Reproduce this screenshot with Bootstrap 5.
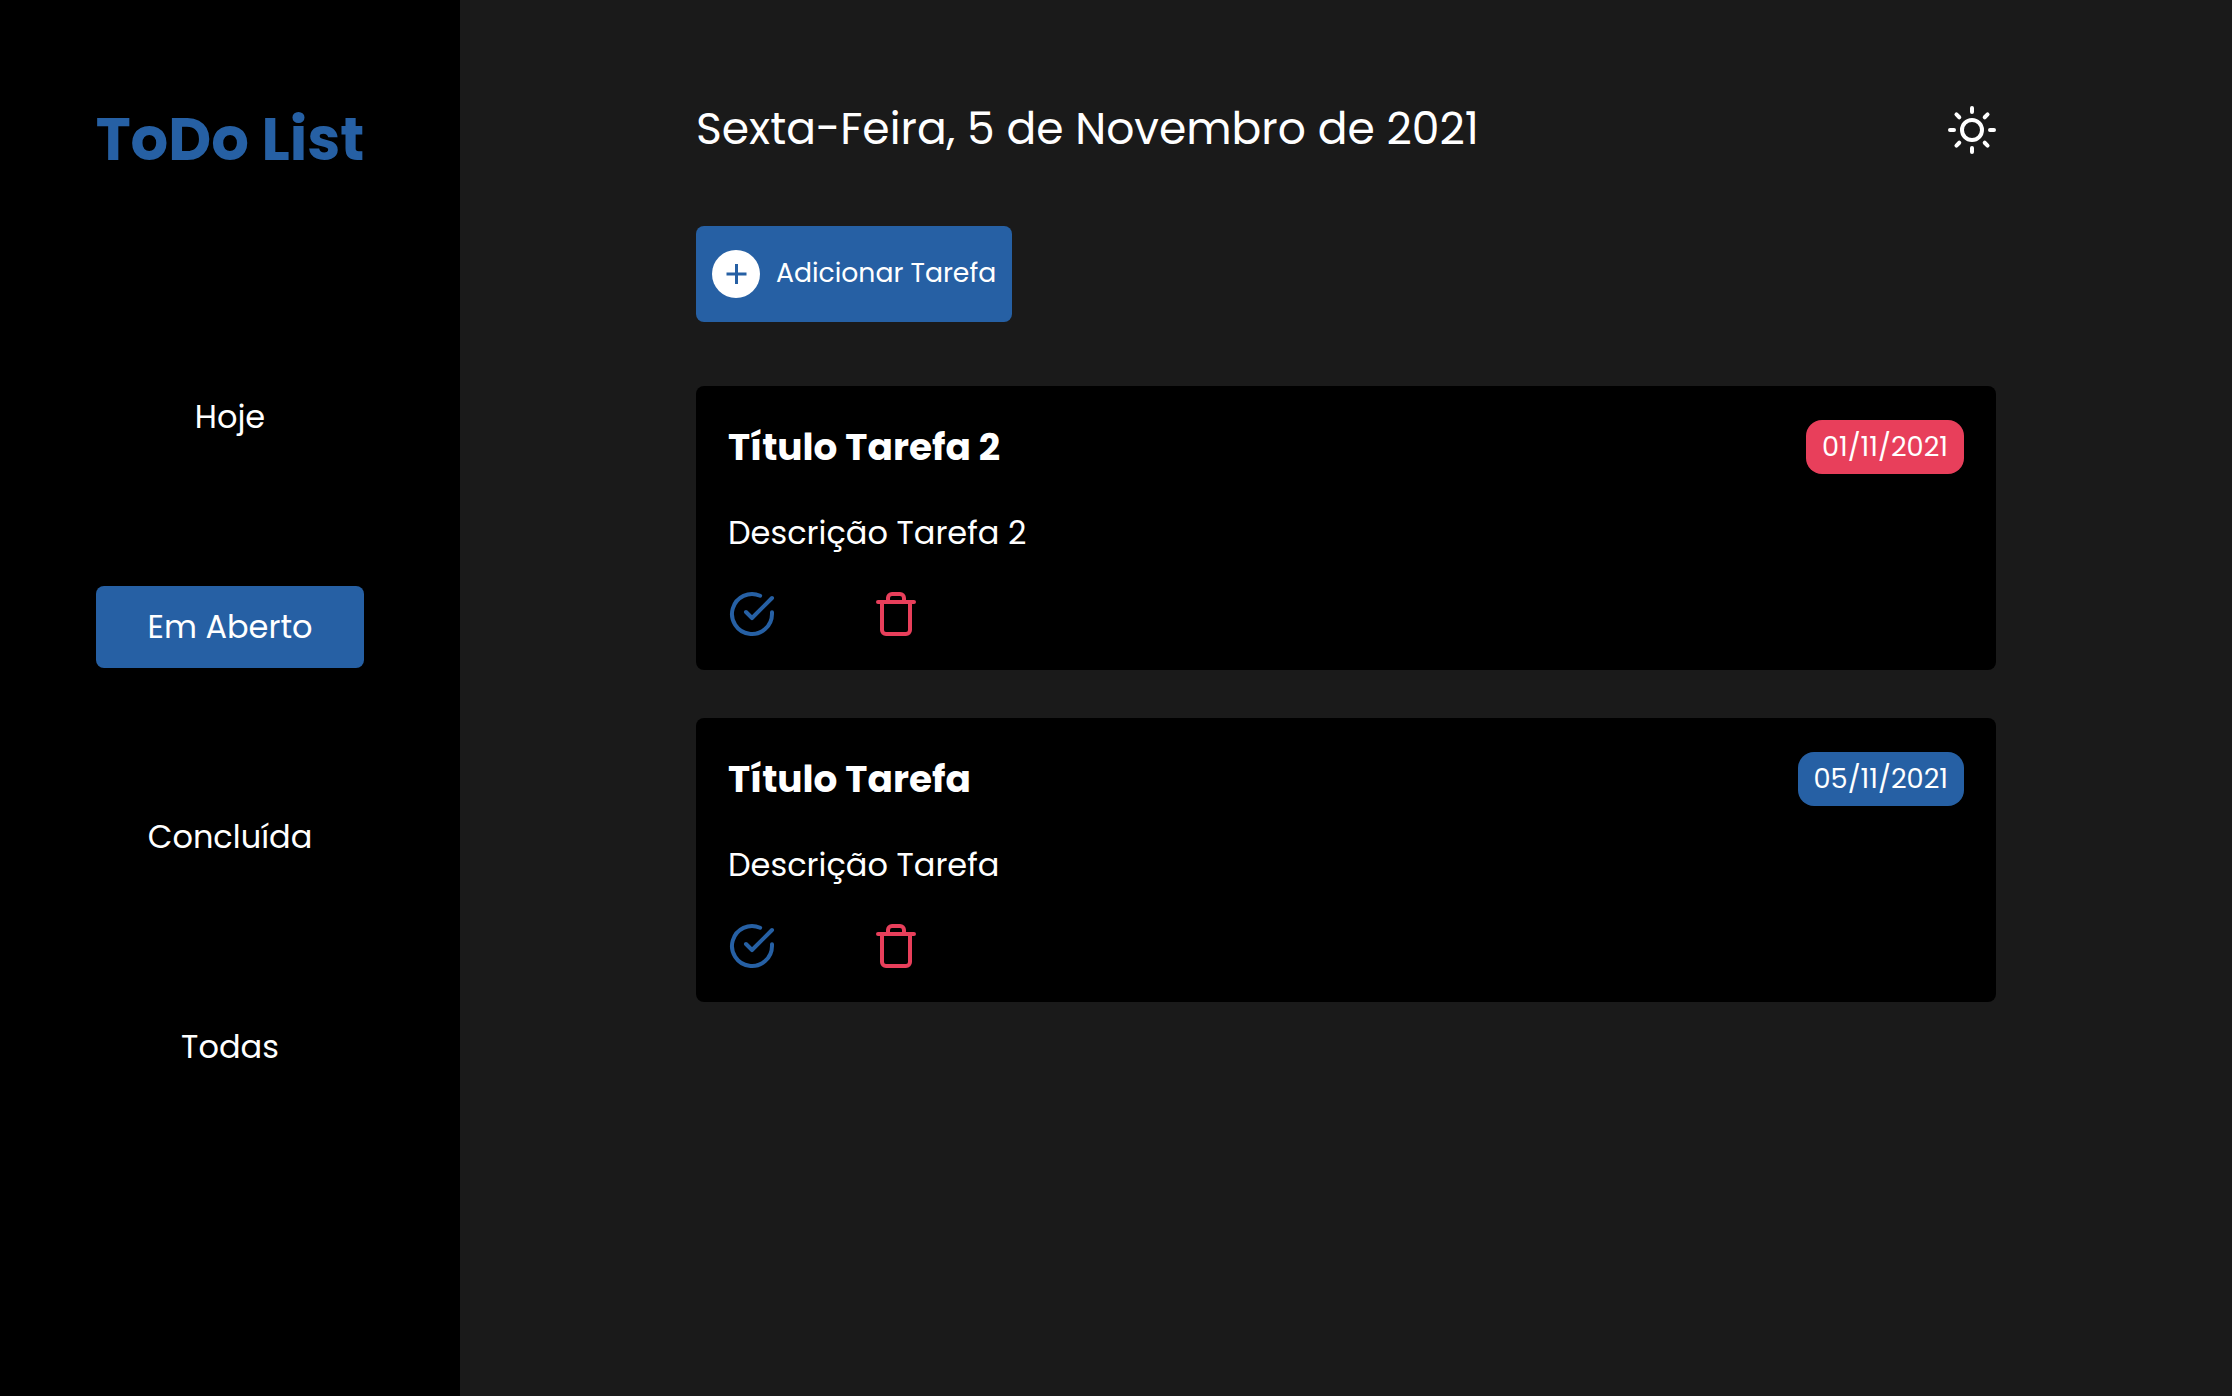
<!DOCTYPE html>
<html lang="pt-BR">
<head>
<meta charset="utf-8">
<meta name="viewport" content="width=device-width, initial-scale=1">
<title>ToDo List</title>
<link href="https://cdn.jsdelivr.net/npm/bootstrap@5.3.0/dist/css/bootstrap.min.css" rel="stylesheet">
<style>
  :root { --brand: #2660a4; --late: #e83f5b; --surface: #000; --page: #1a1a1a; }
  body {
    background: var(--page);
    color: #fff;
    font-family: Poppins, Inter, "Open Sans", sans-serif;
    font-feature-settings: "cv11";
  }
  .sidebar { width: 460px; background: var(--surface); padding: 99px 96px 0; }
  .brand-title { color: var(--brand); font-size: 59.2px; line-height: 81px; margin: 0 -4px 196px; white-space: nowrap; }
  .side-nav { gap: 128px; }
  .side-nav .nav-link {
    color: #fff; font-size: 32px; line-height: 47px;
    padding: 17px 0 18px; border-radius: 8px; width: 268px; text-align: center;
  }
  .side-nav .nav-link.active { background: var(--brand); color: #fff; }
  .content-area { padding: 106px 236px 0; }
  .today { font-size: 44px; line-height: 45px; }
  .btn-add {
    --bs-btn-color: #fff; --bs-btn-bg: var(--brand); --bs-btn-hover-bg: #1f528d; --bs-btn-hover-color: #fff;
    --bs-btn-border-width: 0; --bs-btn-border-radius: 8px; --bs-btn-padding-x: 16px;
    width: 316px; height: 96px; margin: 72px 0 64px;
    font-size: 26.67px; line-height: 39px; white-space: nowrap;
  }
  .btn-add span { padding-bottom: 3px; }
  .task { background: var(--surface); color: #fff; border: 0; border-radius: 8px; padding: 34px 32px 32px; }
  .task-title { font-size: 37.44px; line-height: 54px; }
  .task-text { font-size: 32px; line-height: 47px; margin: 35px 0 34px; }
  .due { height: 54px; border-radius: 16px; padding: 0 16px 1px; font-size: 27.2px; line-height: 39px; background: var(--late); }
  .due.on-time { background: var(--brand); }
  .task-actions { gap: 96px; }
  .line-icon { fill: none; stroke: currentColor; stroke-width: 2; stroke-linecap: round; stroke-linejoin: round; width: 48px; height: 48px; display: block; }
  .done-icon { color: var(--brand); }
  .trash-icon { color: var(--late); }
</style>
</head>
<body>
<div class="d-flex min-vh-100">
  <aside class="sidebar d-flex flex-column align-items-center flex-shrink-0">
    <h1 class="brand-title fw-bold">ToDo List</h1>
    <nav class="side-nav nav flex-column">
      <a class="nav-link" href="#">Hoje</a>
      <a class="nav-link active" href="#">Em Aberto</a>
      <a class="nav-link" href="#">Concluída</a>
      <a class="nav-link" href="#">Todas</a>
    </nav>
  </aside>

  <main class="content-area flex-grow-1">
    <header class="d-flex justify-content-between align-items-start">
      <p class="today mb-0">Sexta-Feira, 5 de Novembro de 2021</p>
      <svg class="line-icon" viewBox="0 0 24 24"><circle cx="12" cy="12" r="5"/><path d="M12 1v2M12 21v2M4.22 4.22l1.42 1.42M18.36 18.36l1.42 1.42M1 12h2M21 12h2M4.22 19.78l1.42-1.42M18.36 5.64l1.42-1.42"/></svg>
    </header>

    <button type="button" class="btn btn-add d-flex align-items-center gap-3">
      <svg width="48" height="48" viewBox="0 0 48 48" class="flex-shrink-0"><circle cx="24" cy="24" r="24" fill="#fff"/><path d="M24.5 14v20M14.5 24h20" stroke="#2660a4" stroke-width="3" fill="none"/></svg>
      <span>Adicionar Tarefa</span>
    </button>

    <section class="d-flex flex-column gap-5">
      <article class="card task">
        <div class="d-flex justify-content-between align-items-center">
          <h2 class="task-title fw-bold mb-0">Título Tarefa 2</h2>
          <span class="badge due fw-normal d-flex align-items-center">01/11/2021</span>
        </div>
        <p class="task-text">Descrição Tarefa 2</p>
        <div class="task-actions d-flex">
          <svg class="line-icon done-icon" viewBox="0 0 24 24"><path d="M22 11.08V12a10 10 0 1 1-5.93-9.14"/><path d="M22 4 12 14.01l-3-3"/></svg>
          <svg class="line-icon trash-icon" viewBox="0 0 24 24"><path d="M3 6h18M19 6v14a2 2 0 0 1-2 2H7a2 2 0 0 1-2-2V6m3 0V4a2 2 0 0 1 2-2h4a2 2 0 0 1 2 2v2"/></svg>
        </div>
      </article>

      <article class="card task">
        <div class="d-flex justify-content-between align-items-center">
          <h2 class="task-title fw-bold mb-0">Título Tarefa</h2>
          <span class="badge due on-time fw-normal d-flex align-items-center">05/11/2021</span>
        </div>
        <p class="task-text">Descrição Tarefa</p>
        <div class="task-actions d-flex">
          <svg class="line-icon done-icon" viewBox="0 0 24 24"><path d="M22 11.08V12a10 10 0 1 1-5.93-9.14"/><path d="M22 4 12 14.01l-3-3"/></svg>
          <svg class="line-icon trash-icon" viewBox="0 0 24 24"><path d="M3 6h18M19 6v14a2 2 0 0 1-2 2H7a2 2 0 0 1-2-2V6m3 0V4a2 2 0 0 1 2-2h4a2 2 0 0 1 2 2v2"/></svg>
        </div>
      </article>
    </section>
  </main>
</div>
<script src="https://cdn.jsdelivr.net/npm/bootstrap@5.3.0/dist/js/bootstrap.bundle.min.js"></script>
</body>
</html>
